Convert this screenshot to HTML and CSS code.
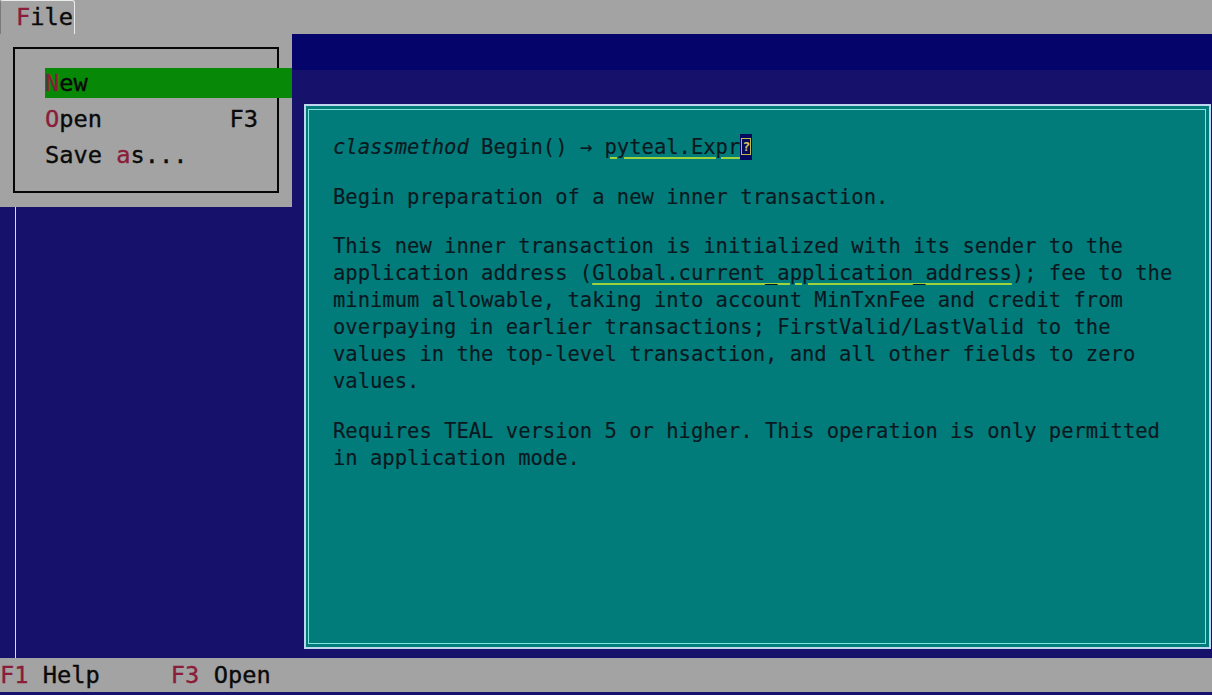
FILE: index.html
```html
<!DOCTYPE html>
<html lang="en">
<head>
<meta charset="utf-8">
<title>PyTeal docs</title>
<link rel="stylesheet" href="styles.css">
</head>
<body>
<div class="screen">
  <header class="menubar">
    <div class="menu-tab"><span class="hot">F</span>ile</div>
  </header>

  <main class="workspace">
    <div class="band"></div>
    <div class="desktop">
      <div class="window"></div>
    </div>

    <div class="dropdown">
      <div class="dropdown-box">
        <div class="item selected"><span><span class="hot">N</span>ew</span></div>
        <div class="item"><span><span class="hot">O</span>pen</span><span class="key">F3</span></div>
        <div class="item"><span>Save <span class="hot">a</span>s...</span></div>
      </div>
    </div>

    <section class="doc">
      <div class="doc-inner">
        <p class="sig"><em>classmethod</em> Begin() → <span class="link">pyteal.Expr</span><span class="cursor"><span class="glyph">?</span></span></p>
        <p>Begin preparation of a new inner transaction.</p>
        <p><span class="line">This new inner transaction is initialized with its sender to the</span><span class="line">application address (<span class="link">Global.current_application_address</span>); fee to the</span><span class="line">minimum allowable, taking into account MinTxnFee and credit from</span><span class="line">overpaying in earlier transactions; FirstValid/LastValid to the</span><span class="line">values in the top-level transaction, and all other fields to zero</span><span class="line">values.</span></p>
        <p><span class="line">Requires TEAL version 5 or higher. This operation is only permitted</span><span class="line">in application mode.</span></p>
      </div>
    </section>
  </main>

  <footer class="statusbar">
    <span class="status-item"><span class="hot">F1</span> Help</span>
    <span class="status-item"><span class="hot">F3</span> Open</span>
  </footer>
  <div class="bottom-edge"></div>
</div>
</body>
</html>
```

FILE: styles.css
```css
* { box-sizing: border-box; }

html, body {
  margin: 0;
  padding: 0;
  width: 1212px;
  height: 695px;
  overflow: hidden;
  background: #16116a;
}

.screen {
  width: 1212px;
  height: 695px;
  display: flex;
  flex-direction: column;
  font-family: "DejaVu Sans Mono", "Liberation Mono", monospace;
  color: #0a0a0a;
}

.hot { color: #8a1d3a; }

/* Menu bar */
.menubar {
  height: 34px;
  background: #a3a3a3;
  display: flex;
  align-items: stretch;
  font-size: 23.7px;
  -webkit-text-stroke: 0.35px currentColor;
}

.menu-tab {
  width: 75px;
  padding-left: 15px;
  border: 1px solid #ececec;
  border-left-color: #7a7a7a;
  border-bottom: none;
  border-radius: 3px 3px 0 0;
  line-height: 33px;
  white-space: pre;
}

/* Workspace */
.workspace {
  position: relative;
  flex: 1;
  display: flex;
  flex-direction: column;
  background: #16116a;
}

.band {
  height: 36px;
  background: #04046b;
}

.desktop {
  flex: 1;
  display: flex;
  padding-left: 15px;
}

.window {
  flex: 1;
  border-left: 1px solid #d4daf6;
}

/* Dropdown menu */
.dropdown {
  position: absolute;
  left: 0;
  top: 0;
  width: 292px;
  height: 173px;
  background: #a3a3a3;
  padding: 13px 0 0 13px;
  font-size: 23.7px;
  -webkit-text-stroke: 0.35px currentColor;
}

.dropdown-box {
  width: 266px;
  height: 146px;
  border: 2px solid #060606;
  padding: 19px 0 0 30px;
  display: flex;
  flex-direction: column;
  gap: 6px;
}

.item {
  width: 247px;
  height: 30px;
  line-height: 30px;
  display: flex;
  padding-right: 34px;
  white-space: pre;
}

.item .key { margin-left: auto; }

.item.selected { background: #078807; }

/* Documentation popup */
.doc {
  position: absolute;
  left: 304px;
  top: 70px;
  width: 907px;
  height: 545px;
  background: #027c7a;
  border: 2px solid #bcd6ee;
  padding: 3px 3px 3px 2px;
}

.doc-inner {
  height: 100%;
  border: 1px solid #82e6de;
  padding: 24px 20px 0 24px;
  font-size: 20.5px;
  line-height: 27px;
  color: #0a1820;
  -webkit-text-stroke: 0.15px currentColor;
}

.doc p {
  margin: 0 0 22.7px 0;
  white-space: pre;
}

.doc .line { display: block; }

.doc em { font-style: italic; }

.link {
  text-decoration: underline;
  text-decoration-color: #9cd23c;
  text-decoration-thickness: 2px;
  text-underline-offset: 3px;
}

.cursor {
  display: inline-block;
  width: 12px;
  height: 26px;
  vertical-align: -6px;
  background: #060a5e;
  position: relative;
  -webkit-text-stroke: 0;
}

.glyph {
  position: absolute;
  left: 1px;
  top: 4px;
  width: 10px;
  height: 17px;
  border: 1px solid #c7b547;
  color: #d6c45a;
  font-size: 13px;
  line-height: 15px;
  text-align: center;
  font-weight: bold;
}

/* Status bar */
.statusbar {
  height: 34px;
  background: #a3a3a3;
  display: flex;
  gap: 71px;
  font-size: 23.7px;
  line-height: 34px;
  white-space: pre;
  -webkit-text-stroke: 0.35px currentColor;
}

.bottom-edge {
  height: 3px;
  background: #16116a;
}
```
